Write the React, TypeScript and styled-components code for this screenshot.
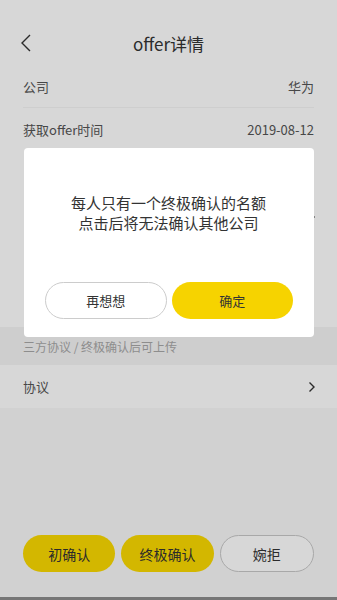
import styled, { createGlobalStyle } from 'styled-components'

const GlobalStyle = createGlobalStyle`
  html, body {
    margin: 0;
    padding: 0;
    background: #ffffff;
  }
  * {
    box-sizing: border-box;
  }
  body {
    font-family: 'Noto Sans CJK SC', 'Noto Sans', sans-serif;
    -webkit-font-smoothing: antialiased;
  }
`

const Page = styled.div`
  width: 337px;
  height: 600px;
  display: flex;
  flex-direction: column;
  background: #ffffff;
  color: #333333;
  overflow: hidden;
`

const NavBar = styled.header`
  height: 65px;
  display: flex;
  align-items: center;
  justify-content: center;
  position: relative;
  padding-top: 22px;
`

const BackIcon = styled.svg`
  position: absolute;
  left: 20px;
  top: 34px;
  width: 12px;
  height: 18px;
`

const NavTitle = styled.h1`
  margin: 0;
  font-size: 17px;
  font-weight: 400;
  color: #333333;
`

const Row = styled.div<{ $divider?: boolean; $tall?: boolean }>`
  height: ${(p) => (p.$tall ? '44px' : '43px')};
  margin: 0 23px;
  display: flex;
  align-items: center;
  justify-content: space-between;
  font-size: 13px;
  color: #555555;
  border-bottom: ${(p) => (p.$divider ? '1px solid #f5f5f5' : 'none')};
`

const Value = styled.span`
  display: inline-flex;
  align-items: center;
  gap: 6px;
  color: #555555;
`

const Chevron = styled.svg`
  width: 8px;
  height: 12px;
  margin-right: -2px;
`

const SectionBand = styled.div`
  height: 38px;
  background: #f5f5f5;
  padding: 11px 23px 0;
  font-size: 12px;
  color: #a8a8a8;
`

const Bottom = styled.div`
  flex: 1;
  background: #f8f8f8;
  display: flex;
  align-items: flex-end;
  gap: 6px;
  padding: 0 23px 25px;
  border-bottom: 3px solid #8c8c8c;
`

const ActionButton = styled.button<{ $primary?: boolean }>`
  flex: 1;
  height: 37px;
  border-radius: 19px;
  font-family: inherit;
  font-size: 14px;
  color: #333333;
  background: ${(p) => (p.$primary ? '#fbda00' : '#ffffff')};
  border: ${(p) => (p.$primary ? 'none' : '1px solid #c8c8c8')};
  padding: 0;
`

const Overlay = styled.div`
  position: fixed;
  inset: 0;
  background: rgba(0, 0, 0, 0.157);
  display: flex;
  justify-content: center;
  align-items: flex-start;
  padding-top: 148px;
`

const Modal = styled.div`
  width: 290px;
  height: 189px;
  background: #ffffff;
  border-radius: 4px;
  display: flex;
  flex-direction: column;
  align-items: center;
  padding: 45px 21px 0;
`

const Message = styled.p`
  margin: 0;
  font-size: 15px;
  line-height: 20px;
  color: #333333;
  text-align: center;
`

const ModalActions = styled.div`
  margin-top: 49px;
  width: 100%;
  display: flex;
  gap: 5px;
`

const ModalButton = styled.button<{ $primary?: boolean }>`
  flex: 1;
  height: 37px;
  border-radius: 19px;
  font-family: inherit;
  font-size: 13px;
  color: #333333;
  background: ${(p) => (p.$primary ? '#f6d300' : '#ffffff')};
  border: ${(p) => (p.$primary ? 'none' : '1px solid #cccccc')};
  padding: 0;
`

const Arrow = () => (
  <Chevron viewBox="0 0 8 12">
    <path d="M1.5 1.5 L6 6 L1.5 10.5" fill="none" stroke="#333" strokeWidth="1.4" />
  </Chevron>
)

export default function App() {
  return (
    <>
      <GlobalStyle />
      <Page>
        <NavBar>
          <BackIcon viewBox="0 0 12 18">
            <path d="M10 1 L2 9 L10 17" fill="none" stroke="#333" strokeWidth="1.4" />
          </BackIcon>
          <NavTitle>offer详情</NavTitle>
        </NavBar>
        <Row $divider>
          <span>公司</span>
          <Value>华为</Value>
        </Row>
        <Row>
          <span>获取offer时间</span>
          <Value>2019-08-12</Value>
        </Row>
        <Row $tall />
        <Row $tall>
          <span />
          <Value>
            <Arrow />
          </Value>
        </Row>
        <Row $tall />
        <Row $tall />
        <SectionBand>三方协议 / 终极确认后可上传</SectionBand>
        <Row>
          <span>协议</span>
          <Value>
            <Arrow />
          </Value>
        </Row>
        <Bottom>
          <ActionButton $primary>初确认</ActionButton>
          <ActionButton $primary>终极确认</ActionButton>
          <ActionButton>婉拒</ActionButton>
        </Bottom>
      </Page>
      <Overlay>
        <Modal>
          <Message>
            每人只有一个终极确认的名额
            <br />
            点击后将无法确认其他公司
          </Message>
          <ModalActions>
            <ModalButton>再想想</ModalButton>
            <ModalButton $primary>确定</ModalButton>
          </ModalActions>
        </Modal>
      </Overlay>
    </>
  )
}
